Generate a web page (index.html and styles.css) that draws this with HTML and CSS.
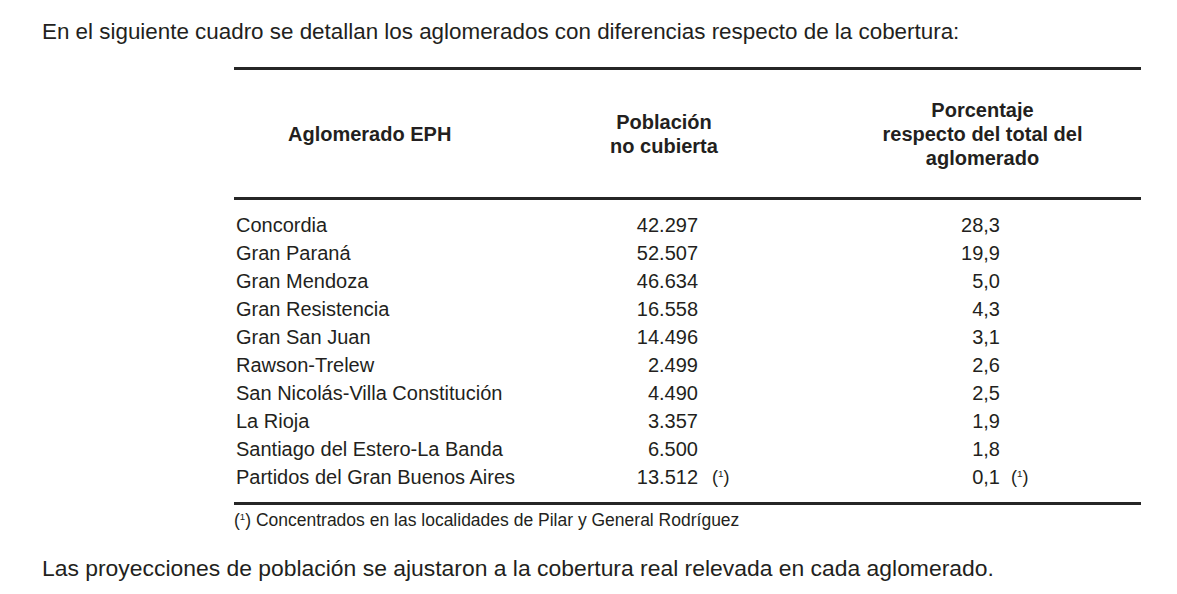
FILE: index.html
```html
<!DOCTYPE html>
<html lang="es">
<head>
<meta charset="utf-8">
<title>Aglomerados</title>
<link rel="stylesheet" href="styles.css">
</head>
<body>
<div class="page">
  <p class="lead">En el siguiente cuadro se detallan los aglomerados con diferencias respecto de la cobertura:</p>
  <div class="tablewrap">
    <div class="grid head">
      <div class="h h-name">Aglomerado EPH</div>
      <div class="h h-num">Población<br>no cubierta</div>
      <div class="h h-pct">Porcentaje<br>respecto del total del<br>aglomerado</div>
    </div>
    <div class="grid body">
      <div class="c name">Concordia</div><div class="c num">42.297</div><div class="c note"></div><div class="c pct">28,3</div><div class="c note"></div>
      <div class="c name">Gran Paraná</div><div class="c num">52.507</div><div class="c note"></div><div class="c pct">19,9</div><div class="c note"></div>
      <div class="c name">Gran Mendoza</div><div class="c num">46.634</div><div class="c note"></div><div class="c pct">5,0</div><div class="c note"></div>
      <div class="c name">Gran Resistencia</div><div class="c num">16.558</div><div class="c note"></div><div class="c pct">4,3</div><div class="c note"></div>
      <div class="c name">Gran San Juan</div><div class="c num">14.496</div><div class="c note"></div><div class="c pct">3,1</div><div class="c note"></div>
      <div class="c name">Rawson-Trelew</div><div class="c num">2.499</div><div class="c note"></div><div class="c pct">2,6</div><div class="c note"></div>
      <div class="c name">San Nicolás-Villa Constitución</div><div class="c num">4.490</div><div class="c note"></div><div class="c pct">2,5</div><div class="c note"></div>
      <div class="c name">La Rioja</div><div class="c num">3.357</div><div class="c note"></div><div class="c pct">1,9</div><div class="c note"></div>
      <div class="c name">Santiago del Estero-La Banda</div><div class="c num">6.500</div><div class="c note"></div><div class="c pct">1,8</div><div class="c note"></div>
      <div class="c name">Partidos del Gran Buenos Aires</div><div class="c num">13.512</div><div class="c note n1">(<sup>1</sup>)</div><div class="c pct">0,1</div><div class="c note n2">(<sup>1</sup>)</div>
    </div>
    <p class="foot">(<sup>1</sup>) Concentrados en las localidades de Pilar y General Rodríguez</p>
  </div>
  <p class="closing">Las proyecciones de población se ajustaron a la cobertura real relevada en cada aglomerado.</p>
</div>
</body>
</html>
```

FILE: styles.css
```css
html, body {
  margin: 0;
  padding: 0;
  background: #ffffff;
}
body {
  font-family: "Liberation Sans", Arial, sans-serif;
  color: #231f20;
}
.page {
  padding: 0 0 0 42px;
  width: 1135px;
}
.lead {
  margin: 19px 0 0 0;
  font-size: 22.4px;
  line-height: 26px;
}
.closing {
  margin: 25px 0 0 0;
  font-size: 22.9px;
  line-height: 26px;
}
.tablewrap {
  margin: 22px 0 0 192px;
  width: 907px;
}
.grid {
  display: grid;
  grid-template-columns: 366px 98px 62px 240px 141px;
}
.head {
  border-top: 3px solid #262626;
  border-bottom: 3px solid #262626;
  height: 127px;
  align-items: center;
  font-weight: bold;
  font-size: 20px;
  line-height: 24px;
}
.h {
  text-align: center;
}
.h-name {
  grid-column: 1;
  text-align: left;
  padding-left: 54px;
}
.h-num {
  grid-column: 2 / 4;
  padding-right: 32px;
}
.h-pct {
  grid-column: 4 / 6;
  padding-left: 64px;
}
.body {
  padding: 11px 0 11px 0;
  border-bottom: 3px solid #262626;
  font-size: 20px;
  line-height: 28px;
}
.c.name {
  padding-left: 2px;
  white-space: nowrap;
}
.c.num, .c.pct {
  text-align: right;
}
.c.note {
  font-size: 18px;
}
.n1 {
  padding-left: 14px;
}
.n2 {
  padding-left: 11px;
}
.note sup, .foot sup {
  font-size: 0.55em;
  line-height: 0;
  vertical-align: 0.6em;
}
.foot {
  margin: 5px 0 0 0;
  font-size: 17.5px;
  line-height: 20px;
}
```
